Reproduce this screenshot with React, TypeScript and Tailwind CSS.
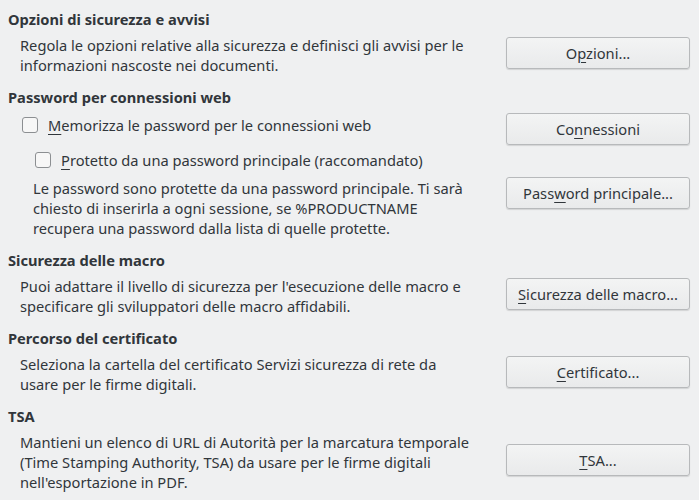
import React from "react";

const font = { fontFamily: '"Noto Sans", "Open Sans", sans-serif' };

function Btn({ pre, u, post, className = "" }: { pre: string; u: string; post: string; className?: string }) {
  return (
    <div
      className={`w-[184px] h-[32px] shrink-0 rounded-[3px] border border-[#b7b9bb] bg-gradient-to-b from-[#f3f4f4] to-[#e9eaeb] shadow-[0_1px_1px_rgba(0,0,0,0.12)] flex items-center justify-center text-[14.67px] text-[#31363b] ${className}`}
    >
      <span>
        {pre}
        <span className="underline underline-offset-[3px] decoration-1">{u}</span>
        {post}
      </span>
    </div>
  );
}

function Check({ u, rest, className = "" }: { u: string; rest: string; className?: string }) {
  return (
    <div className={`flex items-center h-[20px] ${className}`}>
      <div className="w-[16px] h-[16px] rounded-[3px] border border-[#8c8f92] bg-[#f7f7f7] shrink-0" />
      <span className="ml-[10px] leading-[20px]">
        <span className="underline underline-offset-[3px] decoration-1">{u}</span>
        {rest}
      </span>
    </div>
  );
}

function Heading({ children, className = "" }: { children: React.ReactNode; className?: string }) {
  return <div className={`font-bold leading-[20px] ${className}`}>{children}</div>;
}

export default function App() {
  return (
    <div
      style={font}
      className="w-[699px] h-[500px] bg-[#eff0f1] text-[#31363b] text-[14.67px] pl-[8px] pr-[9px] pt-[9px] overflow-hidden"
    >
      <Heading>Opzioni di sicurezza e avvisi</Heading>
      <div className="mt-[6px] flex items-start justify-between">
        <div className="pl-[12px] leading-[20px]">
          Regola le opzioni relative alla sicurezza e definisci gli avvisi per le
          <br />
          informazioni nascoste nei documenti.
        </div>
        <Btn pre="O" u="p" post="zioni..." className="mt-[2px]" />
      </div>

      <Heading className="mt-[12px]">Password per connessioni web</Heading>
      <div className="mt-[6px] flex items-start justify-between">
        <Check u="M" rest="emorizza le password per le connessioni web" className="ml-[14px] mt-[2px]" />
        <Btn pre="Co" u="n" post="nessioni" />
      </div>
      <Check u="P" rest="rotetto da una password principale (raccomandato)" className="ml-[27px] mt-[5px]" />
      <div className="mt-[7px] flex items-start justify-between">
        <div className="pl-[25px] pt-[1px] leading-[20px]">
          Le password sono protette da una password principale. Ti sarà
          <br />
          chiesto di inserirla a ogni sessione, se %PRODUCTNAME
          <br />
          recupera una password dalla lista di quelle protette.
        </div>
        <Btn pre="Pass" u="w" post="ord principale..." />
      </div>

      <Heading className="mt-[12px]">Sicurezza delle macro</Heading>
      <div className="mt-[6px] flex items-start justify-between">
        <div className="pl-[12px] leading-[20px]">
          Puoi adattare il livello di sicurezza per l'esecuzione delle macro e
          <br />
          specificare gli sviluppatori delle macro affidabili.
        </div>
        <Btn pre="" u="S" post="icurezza delle macro..." className="mt-[2px]" />
      </div>

      <Heading className="mt-[12px]">Percorso del certificato</Heading>
      <div className="mt-[6px] flex items-start justify-between">
        <div className="pl-[12px] leading-[20px]">
          Seleziona la cartella del certificato Servizi sicurezza di rete da
          <br />
          usare per le firme digitali.
        </div>
        <Btn pre="" u="C" post="ertificato..." className="mt-[2px]" />
      </div>

      <Heading className="mt-[12px]">TSA</Heading>
      <div className="mt-[6px] flex items-start justify-between">
        <div className="pl-[12px] leading-[20px]">
          Mantieni un elenco di URL di Autorità per la marcatura temporale
          <br />
          (Time Stamping Authority, TSA) da usare per le firme digitali
          <br />
          nell'esportazione in PDF.
        </div>
        <Btn pre="" u="T" post="SA..." className="mt-[12px]" />
      </div>
    </div>
  );
}
